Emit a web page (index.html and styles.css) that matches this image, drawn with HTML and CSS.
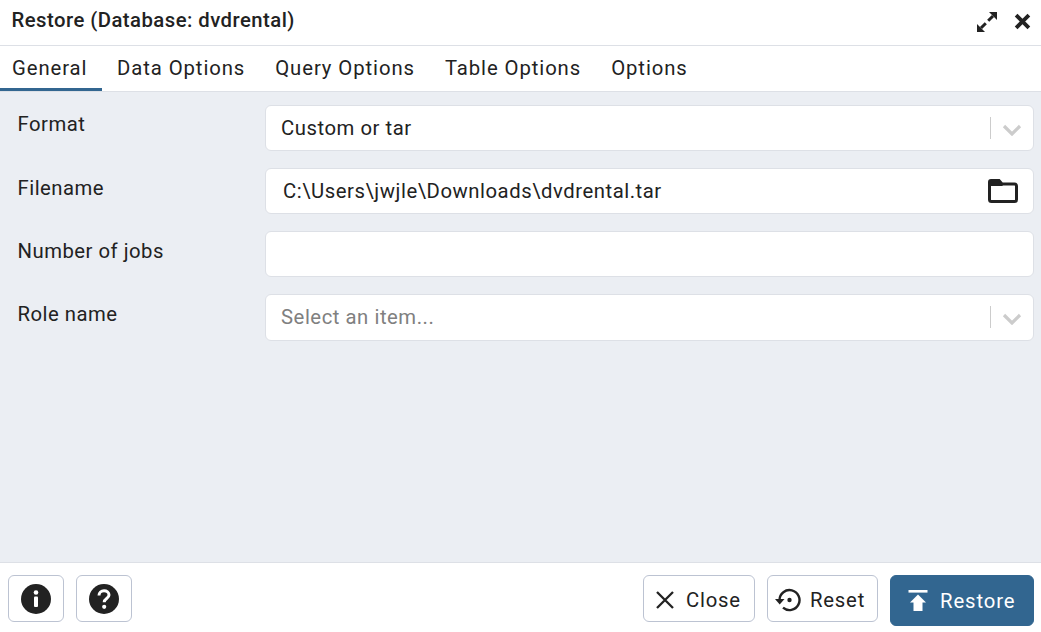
FILE: index.html
```html
<!DOCTYPE html>
<html lang="en">
<head>
<meta charset="utf-8">
<title>Restore (Database: dvdrental)</title>
<link rel="stylesheet" href="styles.css">
</head>
<body>
<div class="dialog">
  <header class="titlebar">
    <span class="title">Restore (Database: dvdrental)</span>
    <div class="title-icons">
      <svg class="ic-expand" viewBox="0 0 20 20"><path d="M0 20V12L8 20Z M20 0V8L12 0Z" fill="#222"/><path d="M4 16L8.800 11.200M16 4L11.200 8.800" stroke="#222" stroke-width="3" fill="none"/></svg>
      <svg class="ic-x" viewBox="0 0 16 16"><path d="M2 2L14 14M14 2L2 14" stroke="#222" stroke-width="3.600" fill="none"/></svg>
    </div>
  </header>
  <nav class="tabs">
    <span class="tab active">General</span>
    <span class="tab">Data Options</span>
    <span class="tab">Query Options</span>
    <span class="tab">Table Options</span>
    <span class="tab">Options</span>
  </nav>
  <main class="form">
    <div class="row">
      <label class="label">Format</label>
      <div class="field select"><span class="value">Custom or tar</span><span class="sep"></span><svg class="chev" viewBox="0 0 20 12"><path d="M2 2L10 10 18 2" stroke="#ccc" stroke-width="3.200" fill="none"/></svg></div>
    </div>
    <div class="row">
      <label class="label">Filename</label>
      <div class="field file"><span class="value">C:\Users\jwjle\Downloads\dvdrental.tar</span><svg class="folder" viewBox="0 0 30 24"><path d="M1.500 3V20.500Q1.500 22.500 3.500 22.500H26.500Q28.500 22.500 28.500 20.500V7Q28.500 5 26.500 5H14L11 1.500H3Q1.500 1.500 1.500 3Z" fill="none" stroke="#222" stroke-width="3"/><path d="M2 2H11L15 7H2Z" fill="#222"/></svg></div>
    </div>
    <div class="row">
      <label class="label">Number of jobs</label>
      <div class="field"></div>
    </div>
    <div class="row">
      <label class="label">Role name</label>
      <div class="field select tall"><span class="value placeholder">Select an item...</span><span class="sep"></span><svg class="chev" viewBox="0 0 20 12"><path d="M2 2L10 10 18 2" stroke="#ccc" stroke-width="3.200" fill="none"/></svg></div>
    </div>
  </main>
  <footer class="footer">
    <div class="group">
      <button class="btn square"><svg class="ic-round" viewBox="0 0 30 30"><circle cx="15" cy="15" r="15" fill="#222"/><circle cx="15" cy="8.500" r="2.300" fill="#fff"/><rect x="13" y="12.500" width="4" height="10.500" rx="1" fill="#fff"/></svg></button>
      <button class="btn square"><svg class="ic-round" viewBox="0 0 30 30"><circle cx="15" cy="15" r="15" fill="#222"/><path d="M10 11.500C10 8.500 12.300 6.800 15 6.800S20 8.500 20 11C20 14.500 15.200 14.500 15.200 18.200" fill="none" stroke="#fff" stroke-width="3"/><circle cx="15.200" cy="22.800" r="2.100" fill="#fff"/></svg></button>
    </div>
    <div class="group right">
      <button class="btn close"><svg class="ic-close" viewBox="0 0 20 20"><path d="M2 2L18 18M18 2L2 18" stroke="#222" stroke-width="2.300" fill="none"/></svg><span>Close</span></button>
      <button class="btn reset"><svg class="ic-reset" viewBox="0 0 26 24"><path d="M4.500 12A10 10 0 1 1 8 19.700" fill="none" stroke="#222" stroke-width="2.400"/><path d="M0 11H9.500L4.700 16.500Z" fill="#222"/><circle cx="14.500" cy="12" r="2.200" fill="#222"/></svg><span>Reset</span></button>
      <button class="btn primary"><svg class="ic-restore" viewBox="0 0 20 21"><rect x="0.500" y="0" width="19" height="2.600" fill="#fff"/><path d="M10 4.500L18 12.500H14.500V21H5.500V12.500H2Z" fill="#fff"/></svg><span>Restore</span></button>
    </div>
  </footer>
</div>
</body>
</html>
```
FILE: styles.css
```css
* { box-sizing: border-box; }
html, body { margin: 0; height: 100%; }
body { font-family: Roboto, "Liberation Sans", sans-serif; color: #222; background: #fff; }
.dialog { width: 1041px; height: 632px; display: flex; flex-direction: column; overflow: hidden; }
.titlebar { height: 46px; flex: none; display: flex; align-items: center; justify-content: space-between; padding: 0 10px 5px 11.500px; border-bottom: 1px solid #dde0e6; }
.title { font-size: 20.300px; font-weight: 500; letter-spacing: 0.470px; color: #222; white-space: nowrap; }
.title-icons { display: flex; align-items: center; gap: 17px; }
.ic-expand { width: 20px; height: 20px; display: block; margin-top: 4px; }
.ic-x { width: 17px; height: 17px; display: block; margin-top: 3px; }
.tabs { height: 46px; flex: none; display: flex; border-bottom: 1px solid #dde0e6; }
.tab { height: 45px; padding: 0 15px; font-size: 20.300px; letter-spacing: 0.920px; line-height: 44px; white-space: nowrap; color: #222; }
.tab.active { width: 102px; padding: 0 0 0 12px; border-bottom: 3px solid #326690; }
.form { flex: 1; background: #ebeef3; padding: 13px 7px 0 17.500px; display: flex; flex-direction: column; gap: 17px; }
.row { display: flex; align-items: flex-start; }
.label { width: 247.500px; flex: none; font-size: 20.300px; line-height: 24px; letter-spacing: 0.500px; padding-top: 8px; color: #222; white-space: nowrap; }
.row:first-child .label { padding-top: 7px; }
.field { flex: 1; height: 46px; background: #fff; border: 1px solid #dde0e6; border-radius: 6px; display: flex; align-items: center; padding: 0 11px 0 15px; font-size: 20.300px; }
.field.tall { height: 47px; padding-bottom: 1px; }
.file { padding-left: 17px; padding-right: 15px; }
.value { flex: 1; letter-spacing: 0.540px; white-space: nowrap; }
.placeholder { color: #808080; }
.sep { width: 1px; height: 22px; background: #ccc; margin-right: 11px; }
.chev { width: 20px; height: 12px; display: block; margin-top: 3px; }
.folder { width: 30px; height: 24px; display: block; }
.footer { height: 70px; flex: none; border-top: 1px solid #dde0e6; display: flex; justify-content: space-between; padding: 12px 7px 0 8px; align-items: flex-start; }
.group { display: flex; gap: 12px; }
.btn { height: 47px; background: #fff; border: 1px solid #bcc3d2; border-radius: 6px; display: flex; align-items: center; justify-content: center; padding: 0; font-family: inherit; font-size: 20.300px; letter-spacing: 0.800px; color: #222; }
.square { width: 56px; }
.ic-round { width: 30px; height: 30px; display: block; }
.close { width: 112px; gap: 11px; justify-content: flex-start; padding: 2px 0 0 11px; }
.reset { width: 111px; gap: 9px; justify-content: flex-start; padding: 2px 0 0 7px; }
.primary { width: 144px; height: 51px; gap: 12px; justify-content: flex-start; padding-left: 17px; background: #326690; border-color: #326690; color: #fff; letter-spacing: 0.900px; }
.ic-close { width: 20px; height: 20px; display: block; }
.ic-reset { width: 26px; height: 24px; display: block; }
.ic-restore { width: 20px; height: 21px; display: block; }
```
